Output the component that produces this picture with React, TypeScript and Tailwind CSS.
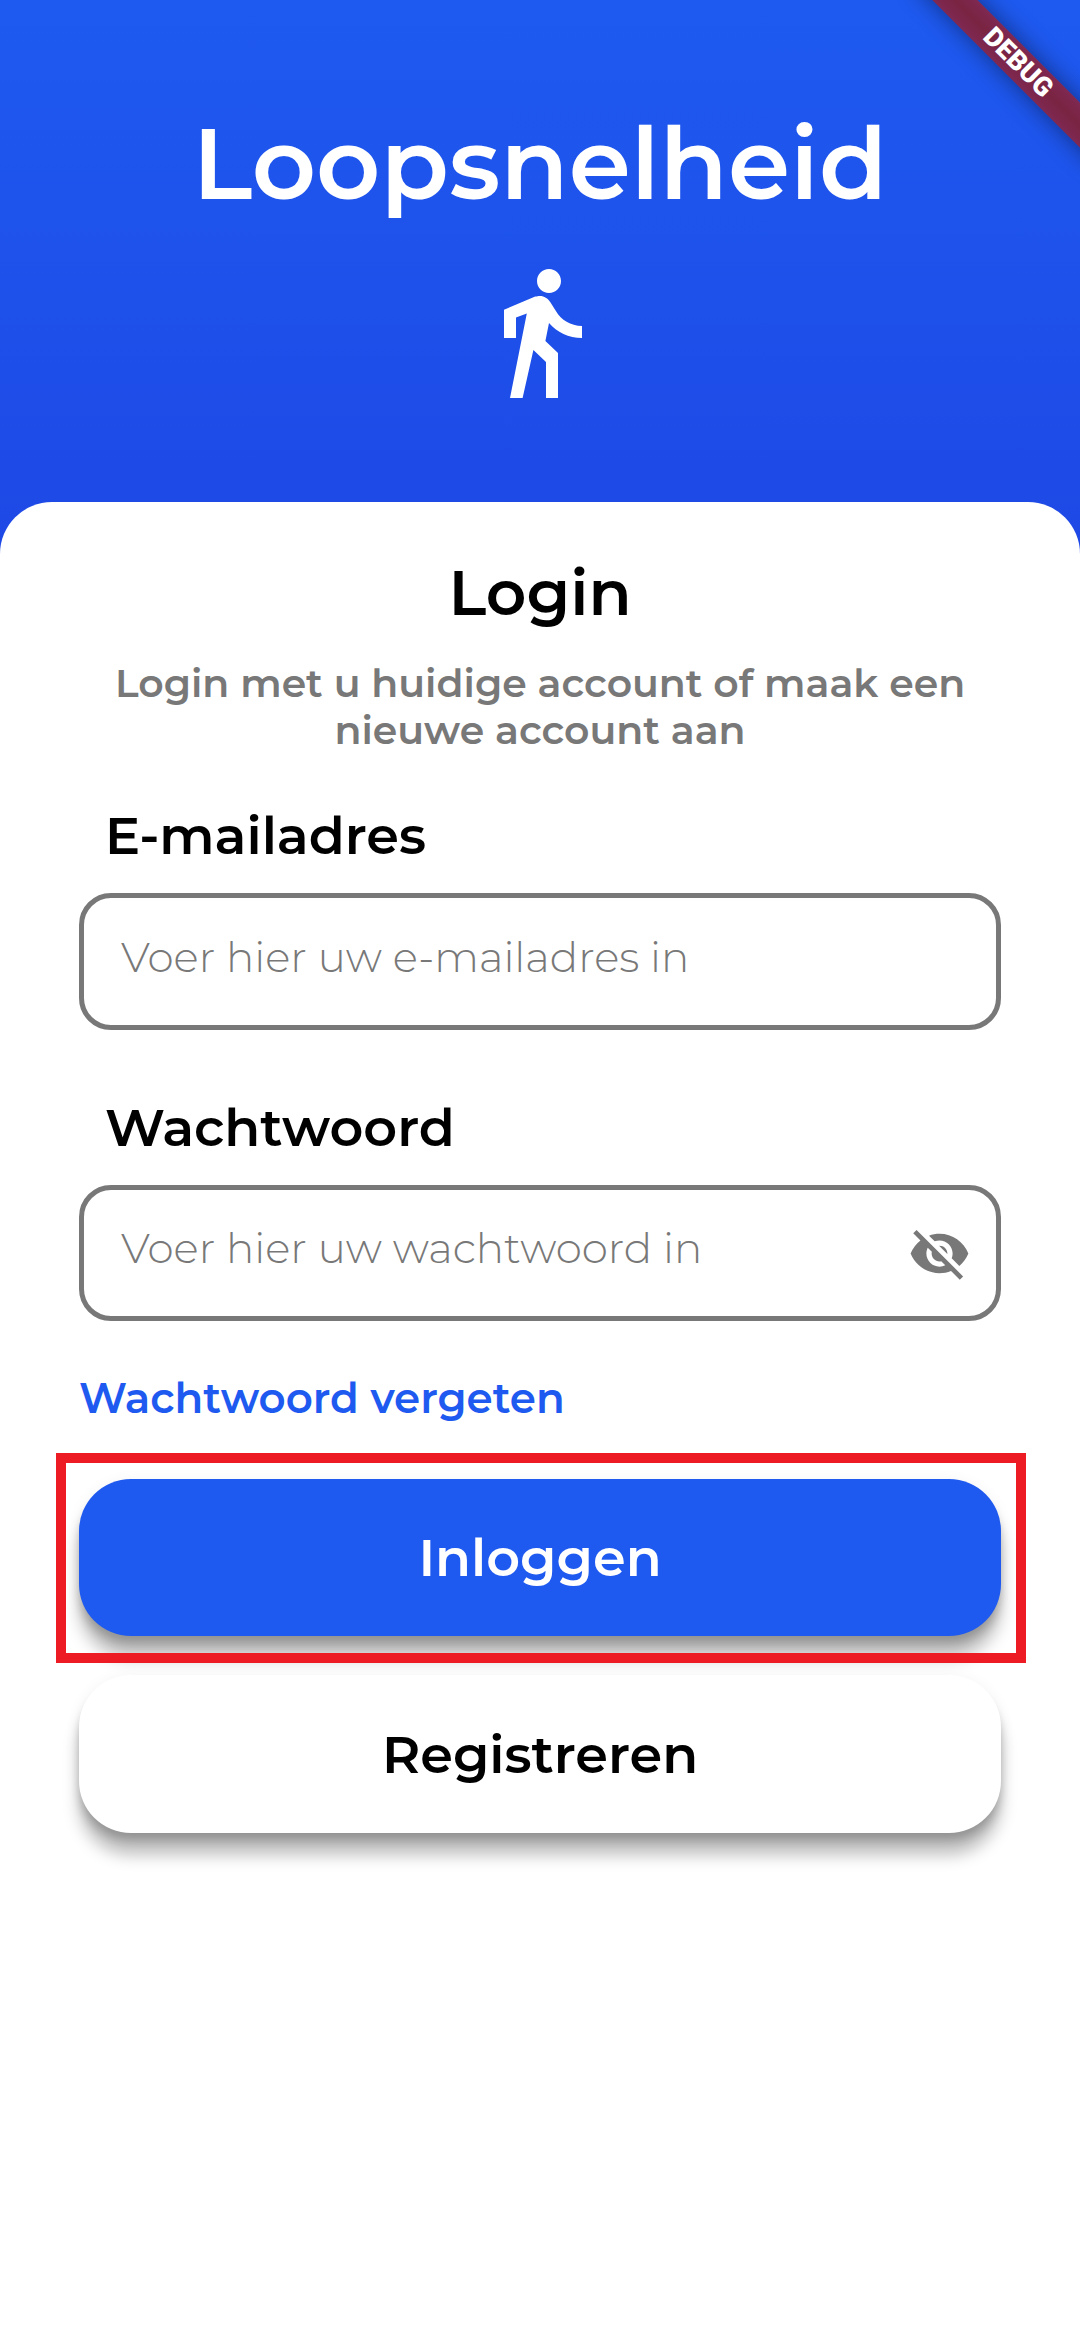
import { MdDirectionsWalk, MdVisibilityOff } from "react-icons/md";

const buttonShape =
  "flex h-[157.5px] w-full items-center justify-center rounded-[52px] text-[52.5px] leading-[64px] font-semibold shadow-[0_9px_10px_-2px_rgba(0,0,0,0.2),0_22px_16px_rgba(0,0,0,0.25),0_3px_16px_rgba(0,0,0,0.06)]";

function Field({ label, hint, secret }: { label: string; hint: string; secret?: boolean }) {
  return (
    <div className="flex flex-col">
      <label className="pl-[26px] text-[52.5px] leading-[64px] font-semibold text-black">{label}</label>
      <div className="mt-[26px] flex h-[136.75px] items-start justify-between rounded-[32px] border-[5.25px] border-[#787878] pt-[32.6px] pr-[25.5px] pl-[37px]">
        <span className="text-[42px] leading-[52px] font-light text-[#787878]">{hint}</span>
        {secret && <MdVisibilityOff className="-mt-[0.6px] size-[63px] text-[#787878]" />}
      </div>
    </div>
  );
}

export default function App() {
  return (
    <div className="relative flex h-[2340px] w-[1080px] flex-col overflow-hidden bg-white bg-[linear-gradient(180deg,#1e5af0_0px,#1e46e4_620px)] font-['Montserrat','Inter',sans-serif]">
      <header className="flex h-[502px] shrink-0 flex-col items-center pt-[102px]">
        <h1 className="text-[99.75px] leading-[122px] font-semibold text-white">Loopsnelheid</h1>
        <MdDirectionsWalk className="mt-[36px] size-[144px] text-white" />
      </header>

      <main className="flex flex-1 flex-col rounded-t-[52px] bg-white px-[79px] pt-[52px]">
        <h2 className="text-center text-[63px] leading-[77px] font-semibold text-black">Login</h2>
        <p className="mt-[28.5px] text-center text-[39.375px] leading-[47px] font-semibold text-[#787878]">
          Login met u huidige account of maak een
          <br />
          nieuwe account aan
        </p>

        <div className="mt-[49.5px] flex flex-col gap-[64.75px]">
          <Field label="E-mailadres" hint="Voer hier uw e-mailadres in" />
          <Field label="Wachtwoord" hint="Voer hier uw wachtwoord in" secret />
        </div>

        <a className="mt-[50.5px] text-[42px] leading-[52px] font-semibold text-[#1e5af0]">Wachtwoord vergeten</a>

        <div className="relative mt-[55px]">
          <button className={`${buttonShape} bg-[#1e5af0] pb-[1px] text-white`}>Inloggen</button>
          <div className="absolute -top-[26px] -left-[23px] h-[210px] w-[970px] border-[10px] border-[#ed1c24]" />
        </div>
        <button className={`${buttonShape} mt-[39px] bg-white text-black`}>Registreren</button>
      </main>

      <div className="absolute top-[46.5px] left-[887.5px] flex h-[31.5px] w-[260px] rotate-45 items-center justify-center bg-[linear-gradient(180deg,#7f2852,#7a2442_50%,#7f2852)] font-['Roboto',sans-serif] text-[26.8px] leading-[31.5px] font-black text-white shadow-[0_0_24px_rgba(0,0,0,0.45)]">
        DEBUG
      </div>
    </div>
  );
}
